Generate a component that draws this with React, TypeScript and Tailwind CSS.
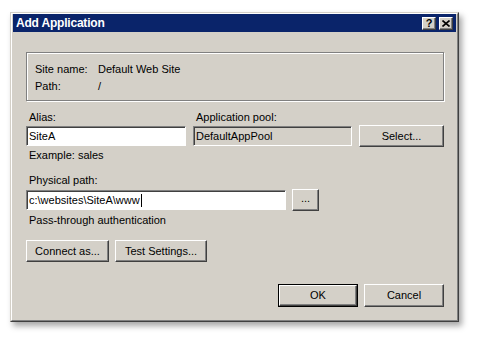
import React from "react";

const face =
  "flex h-full w-full items-center justify-center bg-[#d4d0c8] border border-t-white border-l-white border-b-[#404040] border-r-[#404040] shadow-[inset_-1px_-1px_0_#808080]";
const sunken =
  "flex items-center border border-t-[#808080] border-l-[#808080] border-b-white border-r-white shadow-[inset_1px_1px_0_#404040] pl-[2px]";

function Button({ className, isDefault, children }: { className: string; isDefault?: boolean; children: React.ReactNode }) {
  if (isDefault) {
    return (
      <div className={`border border-black ${className}`}>
        <div className={face}>{children}</div>
      </div>
    );
  }
  return (
    <div className={className}>
      <div className={face}>{children}</div>
    </div>
  );
}

export default function App() {
  return (
    <div className="min-h-[341px] w-[478px] bg-white pt-[12px] pl-[10px] font-['Liberation_Sans',Arial,sans-serif] text-[11px] leading-[17px] text-black">
      {/* window frame */}
      <div className="w-[449px] border border-t-[#d4d0c8] border-l-[#d4d0c8] border-b-[#404040] border-r-[#404040] bg-[#d4d0c8] shadow-[3px_4px_6px_rgba(0,0,0,0.35)]">
        <div className="border border-t-white border-l-white border-b-[#808080] border-r-[#808080] px-px pt-0 pb-px">
          {/* title bar */}
          <div className="flex h-[18px] items-center justify-between bg-[#0a246a] pl-[3px] pr-[3px]">
            <span className="text-[12px] font-bold text-white tracking-[-0.2px]">Add Application</span>
            <div className="flex gap-[3px]">
              <Button className="h-[13px] w-[14px]">
                <span className="text-[11px] font-bold leading-none">?</span>
              </Button>
              <Button className="h-[13px] w-[14px]">
                <svg width="8" height="7" viewBox="0 0 8 7">
                  <path d="M0.5 0.5 L7.5 6.5 M7.5 0.5 L0.5 6.5" stroke="#000" strokeWidth="1.6" />
                </svg>
              </Button>
            </div>
          </div>

          {/* client area */}
          <div className="pt-[20px] pb-[12px] pl-[13px] pr-[12px]">
            {/* group box */}
            <div className="h-[49px] border border-[#808080] pt-[8px] pl-[8px] shadow-[inset_1px_1px_0_#fff,1px_1px_0_#fff]">
              <div className="flex">
                <span className="w-[63px]">Site name:</span>
                <span>Default Web Site</span>
              </div>
              <div className="flex">
                <span className="w-[63px]">Path:</span>
                <span>/</span>
              </div>
            </div>

            {/* alias / pool */}
            <div className="mt-[8px] flex">
              <div className="w-[160px]">
                <div className="h-[17px] pl-[3px]">Alias:</div>
                <div className={`${sunken} h-[20px] bg-white`}>SiteA</div>
              </div>
              <div className="ml-[7px] w-[159px]">
                <div className="h-[17px] pl-[3px]">Application pool:</div>
                <div className={`${sunken} h-[20px] bg-[#d4d0c8]`}>DefaultAppPool</div>
              </div>
              <Button className="ml-[7px] mt-[16px] h-[22px] w-[85px]">Select...</Button>
            </div>

            <div className="h-[17px] pl-[3px]">Example: sales</div>

            <div className="mt-[8px] h-[17px] pl-[3px]">Physical path:</div>
            <div className="flex h-[22px] items-center">
              <div className={`${sunken} h-[20px] w-[260px] bg-white`}>
                <span>c:\websites\SiteA\www</span>
                <span className="ml-px h-[13px] w-px bg-black" />
              </div>
              <Button className="ml-[6px] h-[22px] w-[27px]">
                <span className="pb-[3px]">...</span>
              </Button>
            </div>

            <div className="mt-px h-[17px] pl-[3px]">Pass-through authentication</div>

            <div className="mt-[11px] flex gap-[6px]">
              <Button className="h-[22px] w-[83px]">Connect as...</Button>
              <Button className="h-[22px] w-[92px]">Test Settings...</Button>
            </div>

            <div className="mt-[22px] flex justify-end gap-[6px]">
              <Button isDefault className="h-[23px] w-[80px]">OK</Button>
              <Button className="h-[23px] w-[80px]">Cancel</Button>
            </div>
          </div>
        </div>
      </div>
    </div>
  );
}
